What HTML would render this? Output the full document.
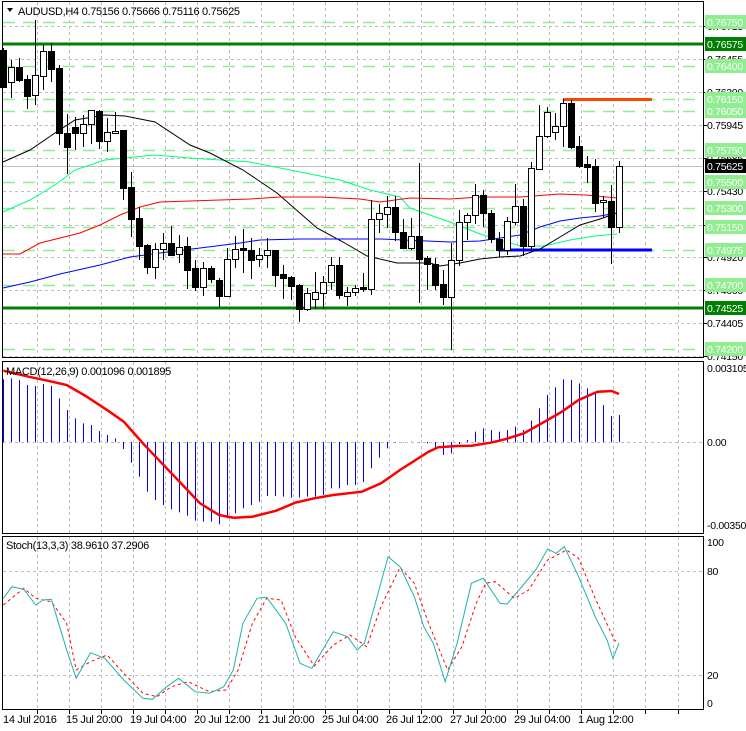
<!DOCTYPE html>
<html><head><meta charset="utf-8"><style>
html,body{margin:0;padding:0;background:#fff;}
svg{display:block;font-family:"Liberation Sans",sans-serif;font-size:11px;}
#axis text{font-size:10.5px;letter-spacing:-0.3px;}
.tl text{letter-spacing:-0.3px;}
</style></head><body>
<svg id="s" width="746" height="731" xmlns="http://www.w3.org/2000/svg">
<rect width="746" height="731" fill="#fff"/>
<g id="grid" stroke="#c0c0c0" stroke-dasharray="3,3" stroke-width="1"></g>
<g id="lev"></g>
<g id="ind"></g>
<g id="cand"></g>
<g fill="none" stroke="#000" stroke-width="1">
<rect x="2.5" y="1.5" width="701" height="356"/>
<rect x="2.5" y="361.5" width="701" height="172"/>
<rect x="2.5" y="536.5" width="701" height="173"/>
</g>
<g id="ticks" stroke="#000"></g>
<polygon points="7,8 13,8 10,12" fill="#000"/>
<g class="tl" fill="#000">
<text x="18" y="15">AUDUSD,H4  0.75156 0.75666 0.75116 0.75625</text>
<text x="6" y="375">MACD(12,26,9) 0.001096 0.001895</text>
<text x="6" y="549">Stoch(13,3,3) 38.9610 37.2906</text>
<text x="3" y="723">14 Jul 2016</text>
<text x="66" y="723">15 Jul 20:00</text>
<text x="130" y="723">19 Jul 04:00</text>
<text x="194" y="723">20 Jul 12:00</text>
<text x="258" y="723">21 Jul 20:00</text>
<text x="322" y="723">25 Jul 04:00</text>
<text x="386" y="723">26 Jul 12:00</text>
<text x="450" y="723">27 Jul 20:00</text>
<text x="514" y="723">29 Jul 04:00</text>
<text x="578" y="723">1 Aug 12:00</text>
</g>
<g id="axis" fill="#000">
<text x="707" y="372">0.003105</text>
<text x="707" y="446">0.00</text>
<text x="707" y="529">-0.003506</text>
<text x="707" y="546">100</text>
<text x="707" y="575">80</text>
<text x="707" y="679">20</text>
<text x="707" y="707">0</text>
</g>
</svg>
<script>
var NS="http://www.w3.org/2000/svg";
function el(p,t,a,txt){var e=document.createElementNS(NS,t);for(var k in a)e.setAttribute(k,a[k]);if(txt)e.textContent=txt;document.getElementById(p).appendChild(e);return e;}
for(var k=0;k<21;k++){var x=36.5+32.05*k;x=Math.round(x)+0.5;
 el("grid","line",{x1:x,y1:2,x2:x,y2:357});el("grid","line",{x1:x,y1:362,x2:x,y2:533});el("grid","line",{x1:x,y1:537,x2:x,y2:709});
 el("ticks","line",{x1:x,y1:710,x2:x,y2:714});}
var ax=[["0.76715",26],["0.76455",59],["0.76200",92],["0.75945",125],["0.75685",158],["0.75430",191],["0.75170",225],["0.74920",257],["0.74660",290],["0.74405",323],["0.74150",356]];
ax.forEach(function(a){el("grid","line",{x1:3,y1:a[1]+.5,x2:703,y2:a[1]+.5});el("axis","text",{x:707,y:a[1]+4},a[0]);el("ticks","line",{x1:704,y1:a[1]+.5,x2:707,y2:a[1]+.5});});
[442,571,675].forEach(function(y){el("grid","line",{x1:3,y1:y+.5,x2:703,y2:y+.5});});
var lg=[["0.76750",22],["0.76400",66],["0.76150",99],["0.76050",111],["0.75750",150],["0.75500",182],["0.75300",208],["0.75150",227],["0.74975",250],["0.74700",285],["0.74200",349]];
lg.forEach(function(a){el("lev","line",{x1:3,y1:a[1]+.5,x2:703,y2:a[1]+.5,stroke:"#90ee90","stroke-width":1.5,"stroke-dasharray":"12,8"});});
el("lev","line",{x1:3,y1:166.5,x2:703,y2:166.5,stroke:"#c0c0c0"});
el("lev","line",{x1:3,y1:44,x2:703,y2:44,stroke:"#008000","stroke-width":3});
el("lev","line",{x1:3,y1:308,x2:703,y2:308,stroke:"#008000","stroke-width":3});
el("lev","line",{x1:563,y1:99.5,x2:652,y2:99.5,stroke:"#ff4500","stroke-width":3});
el("lev","line",{x1:498,y1:250,x2:652,y2:250,stroke:"#0000ff","stroke-width":3});
function pl(pts,col,w,dash,par){var s=pts.map(function(p){return p[0]+","+p[1]}).join(" ");var a={points:s,fill:"none",stroke:col,"stroke-width":w||1};if(dash)a["stroke-dasharray"]=dash;el(par||"ind","polyline",a);}
pl([[3,212],[30,200],[55,185],[75,170],[105,160],[125,158],[155,155],[190,158],[250,162],[300,172],[340,180],[370,190],[400,197],[410,208],[430,215],[450,222],[480,234],[500,240],[520,246],[545,246],[570,240],[595,236],[617,234]],"#00ff7f");
pl([[3,162],[30,150],[55,133],[75,120],[105,115],[125,116],[155,122],[190,145],[210,153],[243,170],[277,193],[317,228],[343,242],[367,256],[397,263],[430,263],[440,266],[460,263],[480,259],[500,257],[520,256],[540,249],[560,237],[580,225],[600,219],[617,213]],"#000");
pl([[3,254],[20,254],[40,243],[80,233],[100,225],[120,215],[140,207],[160,202],[190,201],[250,199],[280,197],[320,197],[360,199],[380,202],[410,198],[450,199],[480,197],[520,197],[560,194],[585,195],[617,198]],"#ff0000");
pl([[3,288],[30,282],[60,274],[100,265],[130,257],[160,253],[200,248],[240,243],[260,240],[300,239],[380,239],[450,242],[480,241],[500,238],[520,235],[540,227],[560,221],[580,218],[600,216],[617,213]],"#0000ff");
var C=[[50,87,0,48,88],[67,82,1,60,98],[67,80,0,58,82],[79,96,0,75,109],[75,95,1,20,105],[51,76,1,45,90],[51,69,0,43,82],[68,133,0,65,145],[133,147,0,114,174],[127,133,0,117,150],[124,133,1,115,147],[110,124,1,110,144],[111,141,0,110,149],[132,141,1,118,152],[131,133,1,112,133],[130,188,0,130,200],[187,219,0,172,237],[218,246,0,207,260],[245,267,0,244,274],[249,267,1,243,279],[243,249,1,233,260],[243,255,0,226,256],[247,254,1,235,263],[246,270,0,237,289],[268,287,0,260,291],[268,287,1,262,296],[268,279,0,266,283],[280,296,0,278,307],[259,296,1,248,296],[249,259,1,236,268],[248,250,0,229,273],[250,260,0,238,279],[255,259,1,248,267],[250,255,1,238,268],[250,275,0,250,287],[274,278,0,265,299],[277,286,0,276,300],[285,309,0,284,322],[293,309,1,288,311],[292,299,1,272,309],[282,293,1,276,309],[265,282,1,257,290],[265,295,0,257,299],[292,296,1,287,306],[288,292,1,285,296],[287,289,0,273,292],[219,289,1,200,295],[213,219,1,204,233],[207,214,1,196,228],[207,232,0,196,241],[232,248,0,219,248],[236,248,1,218,250],[236,259,0,163,303],[258,264,0,256,290],[264,285,0,258,290],[284,297,0,270,305],[260,297,1,243,350],[222,260,1,210,266],[215,222,1,213,240],[195,215,1,184,224],[195,213,0,190,227],[213,239,0,210,243],[239,250,0,232,257],[221,250,1,217,255],[206,222,1,184,225],[206,246,0,199,256],[168,246,1,162,250],[136,169,1,105,169],[112,136,1,107,138],[126,132,1,113,140],[103,126,1,99,147],[103,147,0,100,149],[146,166,0,136,168],[164,167,0,156,183],[166,203,0,159,212],[200,202,1,196,218],[201,227,0,185,264],[166,227,1,161,233]];
C.forEach(function(c,i){var x=3+8*i+0.5;
 el("cand","line",{x1:x,y1:c[3],x2:x,y2:c[4],stroke:"#000"});
 var h=Math.max(1,c[1]-c[0]);
 el("cand","rect",{x:x-3,y:c[0]+.5,width:6,height:h,fill:c[2]?"#fff":"#000",stroke:"#000"});});
var MX=[88,85,90,105,108,102,108,145,180,205,220,225,243,255,265,297,338,380,425,450,465,478,487,497,512,515,515,523,505,490,475,465,455,438,438,440,443,443,440,440,435,415,415,405,405,396,355,323,295,278,277,275,277,280,295,315,310,282,270,245,235,240,245,240,230,240,212,175,135,112,88,90,100,115,125,165,198,195];
MX.forEach(function(Y,i){var x=3+8*i+0.5;var y=350+Y/3;el("ind","line",{x1:x,y1:442,x2:x,y2:y,stroke:"#0000ff"});});
function cv(a){return a.map(function(p){return [(p[0]/2.1).toFixed(1),(350+p[1]/3).toFixed(1)]});}
pl(cv([[7,62],[60,80],[100,92],[140,105],[180,138],[230,185],[260,215],[300,280],[340,340],[380,400],[420,460],[460,495],[490,503],[530,500],[580,482],[620,458],[660,445],[700,435],[760,425],[800,400],[840,360],[900,305],[920,292],[960,288],[990,287],[1030,278],[1060,268],[1100,250],[1150,210],[1180,185],[1215,150],[1255,125],[1285,123],[1300,132]]),"#ff0000",2.5);
pl(cv([[7,765],[50,715],[75,745],[108,755],[140,820],[160,960],[190,935],[225,915],[260,970],[300,1030],[330,1040],[360,1010],[395,995],[440,1025],[475,1020],[500,960],[530,820],[560,745],[590,750],[620,860],[660,948],[700,885],[735,855],[770,890],[800,770],[840,652],[870,700],[900,820],[940,960],[970,890],[1000,760],[1020,700],[1040,695],[1080,745],[1110,720],[1150,630],[1190,600],[1215,625],[1250,745],[1290,870],[1300,880]]),"#ff0000",1,"3,3");
pl(cv([[7,745],[25,710],[50,718],[75,765],[90,750],[108,748],[140,900],[160,985],[190,908],[220,925],[260,990],[300,1045],[320,1048],[350,1010],[375,985],[410,1025],[440,1030],[470,1010],[490,960],[510,820],[540,745],[560,742],[600,820],[630,940],[655,955],[700,845],[730,860],[750,900],[765,880],[815,620],[840,650],[870,740],[890,830],[910,880],[935,995],[960,880],[990,700],[1015,685],[1050,760],[1065,762],[1090,720],[1125,660],[1150,597],[1168,610],[1185,590],[1215,680],[1250,800],[1275,870],[1287,925],[1300,880]]),"#20b2aa",1);
lg.forEach(function(a){el("axis","rect",{x:705,y:a[1]-7,width:41,height:14,fill:"#90ee90"});el("axis","text",{x:707,y:a[1]+4,fill:"#fff"},a[0]);});
[["0.76575",44,"#008000"],["0.74525",308,"#008000"],["0.75625",166,"#000"]].forEach(function(a){el("axis","rect",{x:705,y:a[1]-7,width:41,height:14,fill:a[2]});el("axis","text",{x:707,y:a[1]+4,fill:"#fff"},a[0]);});
</script>
</body></html>
